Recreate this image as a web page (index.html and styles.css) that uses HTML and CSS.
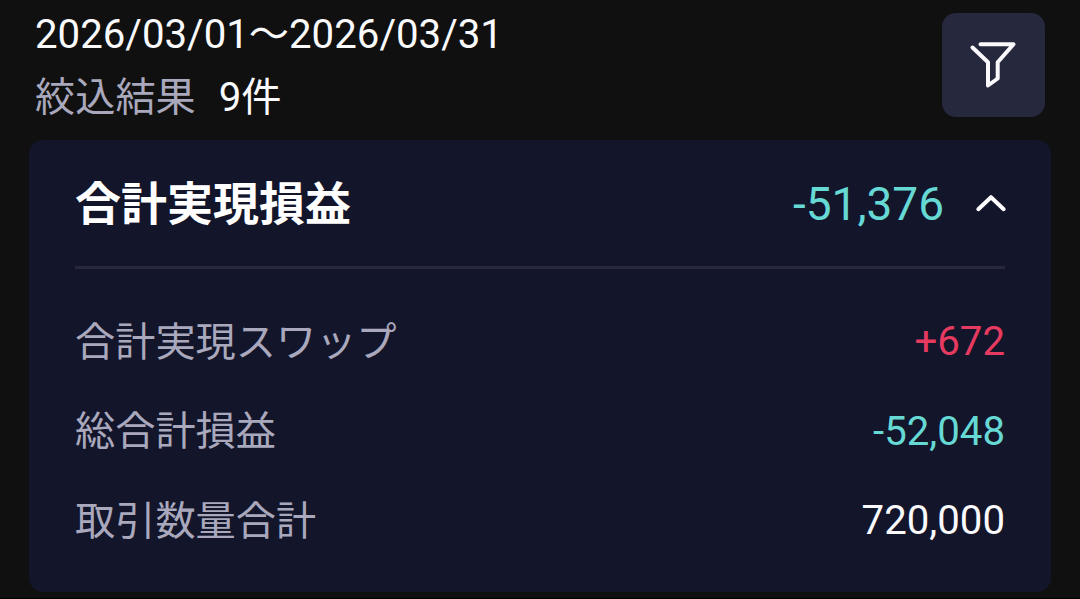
FILE: index.html
```html
<!DOCTYPE html>
<html lang="ja">

<head>
    <meta charset="UTF-8">
    <meta name="viewport" content="width=device-width, initial-scale=1.0">
    <title>合計実現損益</title>
    <link rel="stylesheet" href="styles.css">
</head>

<body>
    <header class="header">
        <div class="summary">
            <div class="period">2026/03/01〜2026/03/31</div>
            <div class="result"><span class="label">絞込結果</span><span class="count">9件</span></div>
        </div>
        <button class="filter-btn" aria-label="絞込">
            <svg width="103" height="104" viewBox="0 0 103 104">
                <path d="M38.500 31.200 H71.500 L55.700 49.200 V65.500 L46 72.500 V49.200 L30.500 34.500"></path>
            </svg>
        </button>
    </header>

    <section class="card">
        <div class="total">
            <h1>合計実現損益</h1>
            <span class="total-value minus">-51,376</span>
            <svg class="chevron" width="30" height="20" viewBox="0 0 30 20">
                <path d="M3.300 16.200 L16 4.200 L28.700 16.200"></path>
            </svg>
        </div>
        <div class="row">
            <span class="label">合計実現スワップ</span>
            <span class="plus">+672</span>
        </div>
        <div class="row">
            <span class="label">総合計損益</span>
            <span class="minus">-52,048</span>
        </div>
        <div class="row">
            <span class="label">取引数量合計</span>
            <span>720,000</span>
        </div>
    </section>
</body>
</html>
```
FILE: styles.css
```css
body {
    margin: 0;
    height: 599px;
    overflow: hidden;
    border-bottom: 1px solid #000;
    background-color: #101010;
    color: #fafafc;
    font-family: Roboto, 'Noto Sans CJK JP', sans-serif;
    font-size: 40.2px;
    box-sizing: border-box;
}

.header {
    display: flex;
    justify-content: space-between;
    height: 140px;
    padding: 13px 35px 0;
    box-sizing: border-box;
}

.period {
    height: 42px;
    padding-top: 1px;
    line-height: 42px;
}

.result {
    display: flex;
    gap: 24px;
    height: 60px;
    margin-top: 12px;
    line-height: 60px;
}

.label {
    color: #a9a8bc;
}

.count {
    margin-left: -1px;
}

.filter-btn {
    width: 103px;
    height: 104px;
    padding: 0;
    border: none;
    border-radius: 14px;
    background-color: #26283e;
}

.filter-btn svg {
    display: block;
    fill: none;
    stroke: #fafafc;
    stroke-width: 4;
    stroke-linejoin: round;
    stroke-linecap: round;
}

.card {
    height: 452px;
    margin: 0 29px;
    padding: 0 46px;
    border-radius: 14px;
    background-color: #13152b;
    box-sizing: border-box;
}

.total {
    display: flex;
    align-items: center;
    height: 129px;
    margin-bottom: 28px;
    border-bottom: 3px solid #27283d;
    box-sizing: border-box;
}

.total h1 {
    flex: 1;
    margin: 0;
    padding-bottom: 7px;
    color: #fff;
    font-size: 46px;
    font-weight: 700;
}

.total-value {
    padding-top: 2px;
    font-size: 46px;
}

.chevron {
    margin-left: 31px;
    overflow: visible;
    fill: none;
    stroke: #fff;
    stroke-width: 4;
    stroke-linejoin: round;
    stroke-linecap: round;
}

.row {
    display: flex;
    align-items: center;
    justify-content: space-between;
    height: 89.5px;
}

.row .label {
    padding-bottom: 7px;
}

.minus {
    color: #66d9d5;
}

.plus {
    color: #e63a60;
}
```
